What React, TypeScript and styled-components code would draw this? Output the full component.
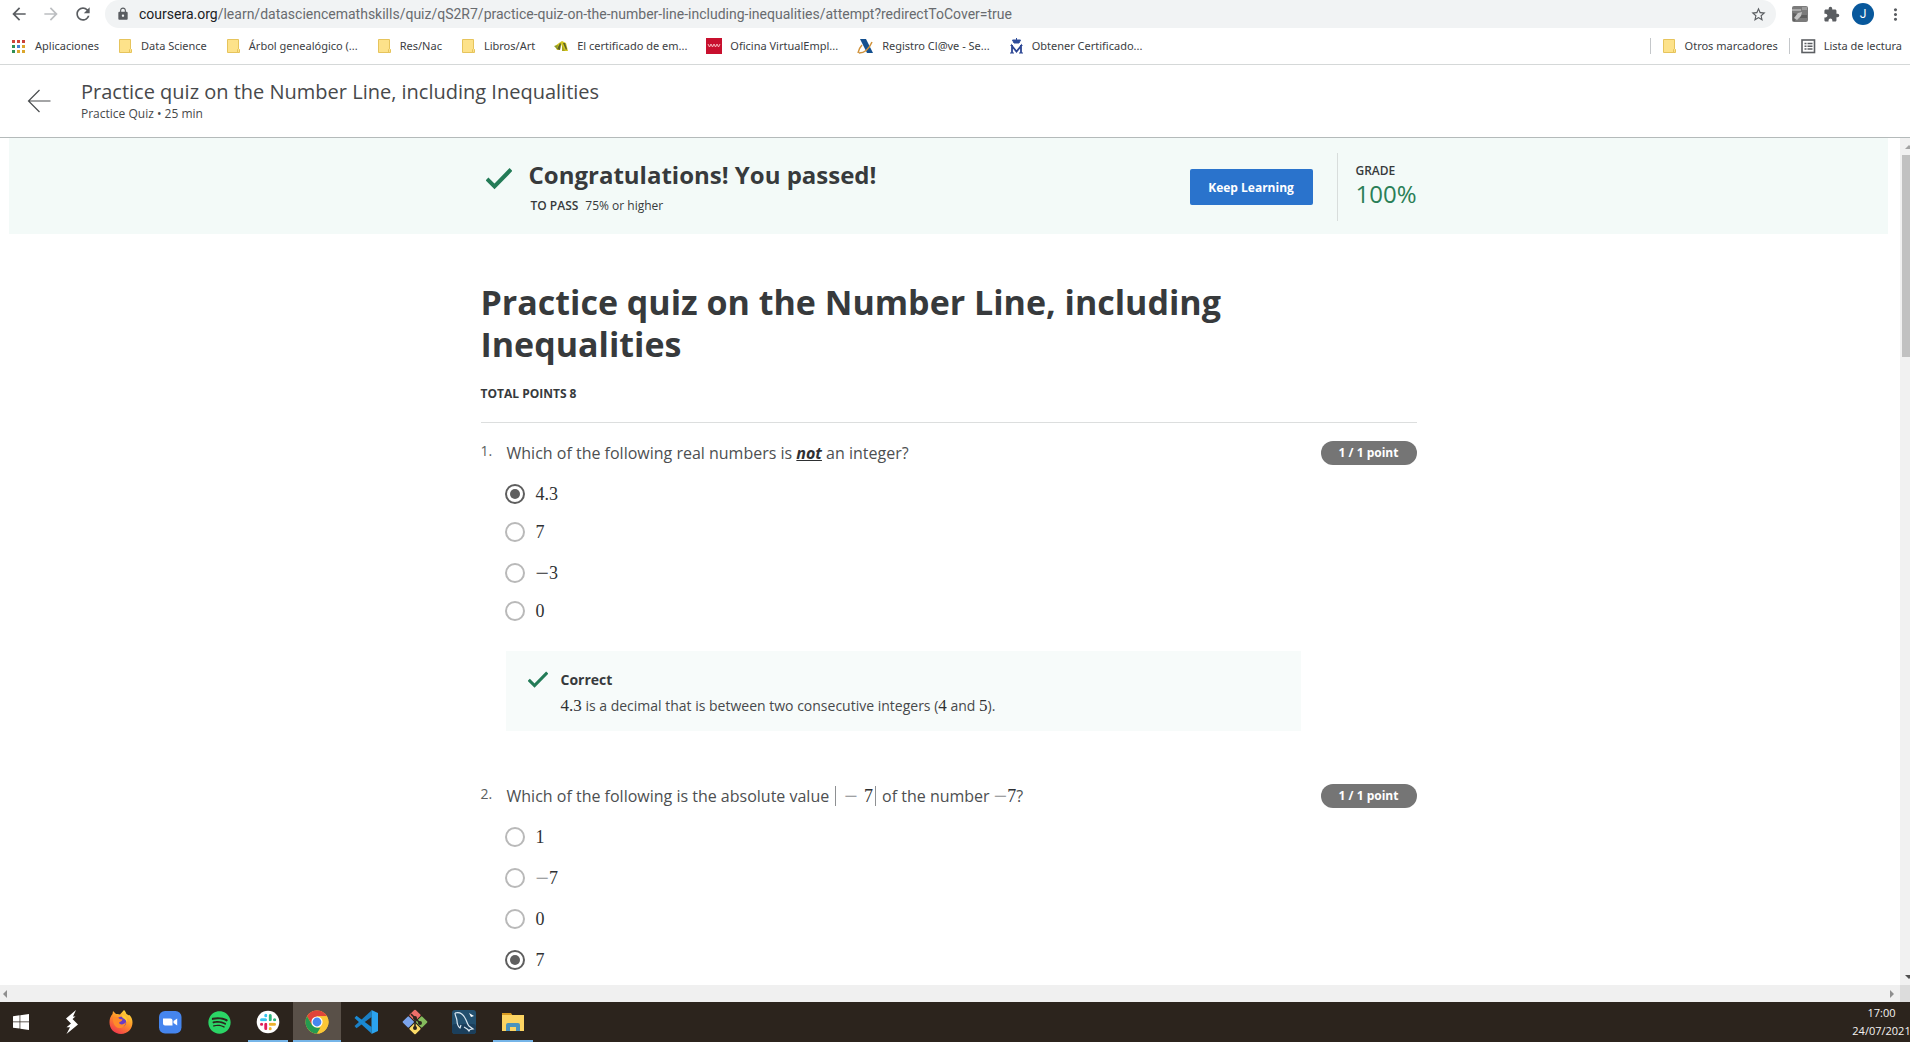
import React from 'react';
import styled, { createGlobalStyle, css } from 'styled-components';
import { MdArrowBack, MdArrowForward, MdRefresh, MdLock, MdStarBorder, MdExtension, MdMoreVert } from 'react-icons/md';
import { FaSpotify } from 'react-icons/fa';

const Global = createGlobalStyle`
  * { box-sizing: border-box; }
  body { margin: 0; background: #fff; font-family: 'Open Sans', 'Noto Sans', sans-serif; color: #373a3c; overflow: hidden; }
  button, input { font-family: inherit; }
  button { cursor: pointer; }
`;

const Screen = styled.div`
  height: 100vh;
  display: flex;
  flex-direction: column;
`;

/* Browser chrome */
const Toolbar = styled.div`
  height: 28px;
  flex: none;
  display: flex;
  align-items: center;
  padding: 0 5px 0 9px;
  overflow: hidden;
  font-family: Roboto, 'Open Sans', sans-serif;
`;
const IconButton = styled.button<{ $faded?: boolean }>`
  border: 0;
  padding: 0;
  background: none;
  width: 20px;
  height: 20px;
  display: flex;
  align-items: center;
  justify-content: center;
  color: ${(p) => (p.$faded ? '#bcbec1' : '#5a5d61')};
`;
const NavGroup = styled.div`
  display: flex;
  gap: 12px;
`;
const Omnibox = styled.form`
  flex: 1;
  height: 28px;
  margin: 0 14px 0 12px;
  padding: 0 8px 0 11px;
  background: #f1f3f4;
  border-radius: 14px;
  display: flex;
  align-items: center;
  font-size: 14px;
  line-height: 20px;
  color: #202124;
`;
const Host = styled.label`
  margin-left: 9px;
`;
const UrlInput = styled.input`
  flex: 1;
  min-width: 0;
  border: 0;
  padding: 0;
  background: none;
  outline: none;
  font-size: 14px;
  line-height: 20px;
  height: 20px;
  color: #686b6f;
`;
const ToolGroup = styled.div`
  display: flex;
  align-items: center;
  gap: 11px;
`;
const Avatar = styled.button`
  border: 0;
  padding: 0;
  width: 22px;
  height: 22px;
  border-radius: 50%;
  background: #08589c;
  color: #fff;
  font-size: 12px;
  line-height: 22px;
`;

const BookmarkBar = styled.nav`
  height: 37px;
  flex: none;
  display: flex;
  justify-content: space-between;
  border-bottom: 1px solid #d5d8d8;
  padding: 0 8px 0 10px;
  font-family: 'Noto Sans', 'Open Sans', sans-serif;
`;
const BookmarkGroup = styled.div<{ $gap: number }>`
  display: flex;
  align-items: center;
  height: 36px;
  gap: ${(p) => p.$gap}px;
`;
const Bookmark = styled.a`
  display: flex;
  align-items: center;
  gap: 8px;
  font-size: 11px;
  line-height: 16px;
  color: #3c4043;
  text-decoration: none;
  white-space: nowrap;
  svg { flex: none; }
`;
const Separator = styled.span`
  width: 1px;
  height: 16px;
  background: #c4c7ca;
`;

/* Quiz header */
const Header = styled.header`
  height: 73px;
  flex: none;
  display: flex;
  padding: 13px 27px 0;
  border-bottom: 1px solid #b4baba;
  color: #47494b;
`;
const BackLink = styled.a`
  width: 54px;
  padding-top: 11px;
`;
const HeaderTitle = styled.div`
  font-size: 20px;
  line-height: 28px;
`;
const HeaderMeta = styled.div`
  font-size: 12px;
  line-height: 16px;
`;

/* Page body with its scroll bars */
const Viewport = styled.div`
  flex: 1;
  min-height: 0;
  display: grid;
  grid-template-columns: minmax(0, 1fr) 10px;
  grid-template-rows: minmax(0, 1fr) 17px;
`;
const Page = styled.main`
  overflow: hidden;
  padding: 0 12px 0 9px;
`;
const VTrack = styled.div`
  background: #f1f1f1;
  display: flex;
  flex-direction: column;
  overflow: hidden;
  padding-left: 2px;
`;
const Thumb = styled.div`
  height: 202px;
  margin-bottom: auto;
  background: #c1c1c1;
`;
const ArrowCell = styled.div`
  height: 17px;
  width: 14px;
  display: flex;
  align-items: center;
  justify-content: center;
`;
const HTrack = styled.div`
  background: #f0f0f0;
  display: flex;
  justify-content: space-between;
  align-items: center;
  padding: 0 4px 0 1px;
`;
const Corner = styled.div`
  background: #dcdcdc;
`;

const Banner = styled.section`
  background: #f3faf8;
  height: 96px;
`;
const Column = styled.div`
  max-width: 936px;
  margin: 0 auto;
`;
const BannerRow = styled(Column)`
  height: 100%;
  padding: 2px 0 0 5px;
  display: flex;
  align-items: center;
`;
const BannerCheck = styled.span`
  align-self: flex-start;
  height: 26px;
  margin-top: 25px;
`;
const BannerText = styled.div`
  flex: 1;
  margin-left: 17px;
`;
const BannerTitle = styled.h2`
  margin: 0 0 6px;
  font-size: 24px;
  line-height: 32px;
  font-weight: 700;
`;
const PassLine = styled.p`
  margin: 0;
  padding-left: 2px;
  font-size: 12px;
  line-height: 18px;
  strong { font-weight: 600; margin-right: 7px; }
`;
const PrimaryButton = styled.button`
  border: 0;
  border-radius: 2px;
  background: #2a73cc;
  color: #fff;
  width: 123px;
  height: 36px;
  font-size: 12px;
  font-weight: 700;
`;
const Grade = styled.div`
  margin-left: 24px;
  height: 68px;
  width: 80px;
  border-left: 1px solid #d8dddc;
  padding: 9px 0 0 18px;
`;
const GradeLabel = styled.div`
  font-size: 12px;
  line-height: 18px;
  font-weight: 600;
`;
const GradeValue = styled.div`
  font-size: 24px;
  line-height: 28px;
  color: #2a7f57;
`;

const Title = styled.h1`
  margin: 47px 0 20px;
  font-size: 34px;
  line-height: 42px;
  font-weight: 700;
`;
const Points = styled.p`
  margin: 0;
  padding-bottom: 19px;
  border-bottom: 1px solid #dcdede;
  font-size: 12px;
  line-height: 18px;
  font-weight: 700;
`;

const QuestionBlock = styled.fieldset`
  border: 0;
  margin: 0 0 53px;
  padding: 0;
  min-width: 0;
`;
const QuestionList = styled.div`
  padding-top: 18px;
`;
const QuestionRow = styled.div`
  display: flex;
  height: 24px;
`;
const Ordinal = styled.span`
  width: 26px;
  flex: none;
  font-size: 14px;
  line-height: 20px;
  color: #5b5e60;
`;
const Prompt = styled.div`
  flex: 1;
  font-size: 16px;
  line-height: 24px;
  color: #4d4f51;
  em { font-weight: 700; text-decoration: underline; color: #2e3032; }
`;
const Pill = styled.span`
  width: 96px;
  height: 24px;
  border-radius: 12px;
  background: #757575;
  color: #fff;
  font-size: 12px;
  line-height: 24px;
  font-weight: 700;
  text-align: center;
`;
const Options = styled.div`
  padding-left: 24px;
`;
const Option = styled.label<{ $tight?: boolean }>`
  display: flex;
  align-items: center;
  width: fit-content;
  height: 24px;
  margin-top: ${(p) => (p.$tight ? 14 : 17)}px;
`;
const Radio = styled.input`
  appearance: none;
  margin: 0 11px 0 0;
  width: 20px;
  height: 20px;
  border: 2px solid #b9b9b9;
  border-radius: 50%;
  display: grid;
  place-items: center;
  &:checked { border-color: #5e5e5e; }
  &:checked::before {
    content: '';
    width: 10px;
    height: 10px;
    border-radius: 50%;
    background: #5e5e5e;
  }
`;
const MathText = styled.span<{ $small?: boolean }>`
  font-family: 'Liberation Serif', serif;
  font-size: ${(p) => (p.$small ? 17 : 18)}px;
  line-height: 20px;
  color: #2f3133;
`;
const Minus = styled.span<{ $spaced?: boolean; $light?: boolean }>`
  font-size: 24px;
  line-height: 1px;
  vertical-align: -2px;
  margin: 0 ${(p) => (p.$spaced ? '6px' : '0')};
  ${(p) => p.$light && css`color: #8a8c8e;`}
`;
const Bar = styled.span`
  display: inline-block;
  width: 1px;
  height: 20px;
  margin: 0 2px;
  background: #8e9092;
  vertical-align: -4px;
`;
const Feedback = styled.div`
  margin: 28px 116px 0 25px;
  padding: 16px 22px 12px;
  background: #f7fbfa;
  display: flex;
  gap: 13px;
  svg { flex: none; margin-top: 2px; }
`;
const FeedbackTitle = styled.div`
  font-size: 14px;
  line-height: 26px;
  font-weight: 700;
`;
const FeedbackText = styled.div`
  font-size: 14px;
  line-height: 26px;
  color: #47494b;
`;

/* Taskbar */
const Taskbar = styled.footer`
  height: 40px;
  flex: none;
  background: #2c241d;
  display: flex;
  justify-content: space-between;
  overflow: hidden;
`;
const Apps = styled.div`
  display: flex;
  gap: 1px;
`;
const AppButton = styled.button<{ $state?: 'open' | 'active'; $start?: boolean }>`
  width: ${(p) => (p.$start ? 47 : 48)}px;
  height: 40px;
  border: 0;
  padding: 0 ${(p) => (p.$start ? 6 : 0)}px 0 0;
  display: flex;
  align-items: center;
  justify-content: center;
  background: ${(p) => (p.$state === 'active' ? '#595048' : 'none')};
  ${(p) => p.$state && css`
    background-image: linear-gradient(#76b5e8, #76b5e8);
    background-repeat: no-repeat;
    background-position: bottom;
    background-size: ${p.$state === 'active' ? '100%' : '40px'} 2px;
  `}
`;
const Clock = styled.time`
  width: 57px;
  padding-top: 2px;
  display: flex;
  flex-direction: column;
  align-items: center;
  color: #f4f2f0;
  font-size: 11px;
  line-height: 18px;
`;

const FolderIcon = () => (
  <svg width="15" height="16" viewBox="0 0 15 16" aria-hidden="true">
    <path d="M1.500 1.500h11v13h-11z" fill="#fde28a" stroke="#e6c45c" />
    <path d="M11.500 14.500v-3l1-1 1 1v3z" fill="#fde28a" stroke="#e6c45c" />
  </svg>
);
const AppsIcon = () => {
  const colors = ['#d0453a', '#d0453a', '#c9403a', '#2f8f55', '#3f83d8', '#dba62c', '#2f8f55', '#dba62c', '#dba62c'];
  return (
    <svg width="17" height="16" viewBox="0 0 17 16" aria-hidden="true">
      {colors.map((c, i) => (
        <rect key={i} x={2 + (i % 3) * 5} y={2 + Math.floor(i / 3) * 5} width="3" height="3" fill={c} />
      ))}
    </svg>
  );
};
const LeafIcon = () => (
  <svg width="15" height="16" viewBox="0 0 15 16" aria-hidden="true">
    <path d="M1 8l4-3 3-2 4 2 2 8h-4L7 6l-1 6H3z" fill="#d3c61f" />
    <path d="M3 11l3-6 1 1-1 6zM9 5l3 7 1-1-2-6z" fill="#5b6128" />
    <path d="M0 8l4-1-1 4z" fill="#8d9a2a" />
    <path d="M8 7l3 6H8z" fill="#a9a41f" />
  </svg>
);
const MadridIcon = () => (
  <svg width="16" height="16" viewBox="0 0 16 16" aria-hidden="true">
    <rect width="16" height="16" fill="#c8102e" />
    <path d="M2 6l1.500 3L5 6l1.500 3L8 6l1.500 3L11 6l1.500 3L14 6" fill="none" stroke="#f5b8bd" />
  </svg>
);
const AgencyIcon = () => (
  <svg width="17" height="16" viewBox="0 0 17 16" aria-hidden="true">
    <path d="M3 1h6l7 14h-6z" fill="#14508f" />
    <path d="M1 15c1-4 2-6 4-8M2 15c5 0 10-4 13-11" fill="none" stroke="#d0923a" strokeWidth="1.500" />
  </svg>
);
const MintIcon = () => (
  <svg width="15" height="16" viewBox="0 0 15 16" aria-hidden="true">
    <path d="M3.500 2h8l-1.500 3H5zM7.500 0v3" fill="#2f4d9a" stroke="#2f4d9a" />
    <path d="M3 15V8l4.500 5.500L12 8v7" fill="none" stroke="#2b4593" strokeWidth="1.800" />
    <path d="M1 15h4M10 15h4M1.500 7.500H4M11 7.500h2.500" stroke="#2b4593" />
  </svg>
);
const ReadingIcon = () => (
  <svg width="15" height="16" viewBox="0 0 15 16" aria-hidden="true">
    <rect x="1" y="2" width="12.500" height="12.500" fill="none" stroke="#5c5f63" strokeWidth="1.600" />
    <path d="M3.500 5.500h2M3.500 8.300h2M3.500 11h2M6.500 5.500h5M6.500 8.300h5M6.500 11h5" stroke="#5c5f63" strokeWidth="1.400" />
  </svg>
);
const PhotoIcon = () => (
  <svg width="16" height="16" viewBox="0 0 16 16" aria-hidden="true">
    <rect width="16" height="16" rx="2" fill="#7b7b7b" />
    <path d="M0 3h9v2H0z" fill="#a9a9a9" />
    <path d="M10 1h5v3h-5z" fill="#9a9a9a" />
    <path d="M1 7l4 1-2 7H1zM8 9h7v3H8z" fill="#5f5f5f" />
    <path d="M2 12l4-5 4-1-1 4-4 4z" fill="#c4c4c4" />
  </svg>
);
const LongArrow = () => (
  <svg width="24" height="24" viewBox="0 0 24 24" fill="none" stroke="#4a4d4f" strokeWidth="1.200" aria-hidden="true">
    <path d="M12.500 1L1.500 12l11 11M1.500 12h22" />
  </svg>
);
const Check = ({ size, width }: { size: number; width: number }) => (
  <svg width={size} height={size} viewBox="0 0 26 26" fill="none" stroke="#237b57" strokeWidth={width} aria-hidden="true">
    <path d="M1 14l7.500 7.500L25 4.500" />
  </svg>
);
const Triangle = ({ dir, color }: { dir: 'up' | 'down' | 'left' | 'right'; color: string }) => {
  const d = { up: 'M0 6h8L4 2z', down: 'M0 2h8L4 6z', left: 'M6 0v8L2 4z', right: 'M2 0v8l4-4z' }[dir];
  return (
    <svg width="8" height="8" viewBox="0 0 8 8" aria-hidden="true"><path d={d} fill={color} /></svg>
  );
};

const WindowsLogo = () => (
  <svg width="16" height="16" viewBox="0 0 16 16" fill="#fff" aria-hidden="true">
    <path d="M0 2.200l6.600-.9v6.300H0zM7.300 1.200L16 0v7.600H7.300zM0 8.300h6.600v6.300L0 13.700zM7.300 8.300H16V16l-8.700-1.200z" />
  </svg>
);
const BoltLogo = () => (
  <svg width="14" height="24" viewBox="0 0 14 24" fill="#fff" aria-hidden="true">
    <path d="M11 0L1 8.500l5 5-4.500 3.800h3.500L1.500 24 13 14.500 7.500 9l3-2.500H8z" />
  </svg>
);
const FirefoxLogo = () => (
  <svg width="24" height="24" viewBox="0 0 24 24" aria-hidden="true">
    <defs>
      <linearGradient id="fx" x1="0.800" y1="0" x2="0.200" y2="1">
        <stop offset="0" stopColor="#ffe23e" /><stop offset="0.450" stopColor="#ff9328" /><stop offset="1" stopColor="#f02f50" />
      </linearGradient>
    </defs>
    <path d="M15 0c1 1 2 2.500 2.300 3.700C19 5 20 5.500 20.500 5c2 2 3 4.500 3 7.500C23.500 19 18.500 24 12 24S.500 19 .500 12.500C.500 8.500 1.800 6 3.500 4l.500-3 3 3c1.500-.300 3 0 4 .500C12 3 13.500 2 15 0z" fill="url(#fx)" />
    <circle cx="12" cy="12" r="5.300" fill="#6a3cc4" />
    <path d="M4 8c3-1.500 5-1 6 .500 1 1.200 3 .500 3.500 1-.500 2-3 2-3.500 3.500 1 2 5 2 7-1-1 5-4 6.500-7 6C6 17.500 3.500 13 4 8z" fill="#ff8a2a" />
    <path d="M13 5c3 0 6 3 5 8-1-3-2-4-4.500-5z" fill="#ffca36" />
  </svg>
);
const ZoomLogo = () => (
  <svg width="24" height="24" viewBox="0 0 24 24" aria-hidden="true">
    <rect x="1" y="1" width="22.500" height="22.500" rx="6" fill="#4585ee" />
    <path d="M5 8.500h7.500a2 2 0 0 1 2 2v5H7a2 2 0 0 1-2-2zM15.500 11l3.700-2.500v7L15.500 13z" fill="#fff" />
  </svg>
);
const SlackLogo = () => (
  <svg width="24" height="24" viewBox="0 0 24 24" aria-hidden="true">
    <circle cx="12" cy="12" r="11.300" fill="#fff" />
    <g strokeWidth="3" strokeLinecap="round">
      <path d="M5.500 9.800h4M9.800 5.300v.500" stroke="#36c5f0" />
      <path d="M14.200 5.500v4.300M18.500 9.800h.200" stroke="#2eb67d" />
      <path d="M14.200 14.200h4.300M14.200 18.500v.200" stroke="#ecb22e" />
      <path d="M9.800 14.200v4.300M5.500 14.200h.200" stroke="#e01e5a" />
    </g>
    <path d="M12 4v16M4 12h16" stroke="#fff" />
  </svg>
);
const ChromeLogo = () => (
  <svg width="24" height="24" viewBox="0 0 24 24" aria-hidden="true">
    <circle cx="12" cy="12" r="11.500" fill="#fbc735" />
    <path d="M2.040 6.250A11.500 11.500 0 0 1 21.960 6.250L12 6.300 7 14.900z" fill="#e0453a" />
    <path d="M2.040 6.250L7 14.900 12 17.700h5L12 23.500A11.500 11.500 0 0 1 2.040 6.250z" fill="#259b50" />
    <path d="M21.960 6.250A11.500 11.500 0 0 1 12 23.500L17 14.800 12 6.300z" fill="#fbc735" />
    <circle cx="12" cy="12" r="5.600" fill="#fff" />
    <circle cx="12" cy="12" r="4.400" fill="#4787f0" />
  </svg>
);
const CodeLogo = () => (
  <svg width="26" height="26" viewBox="0 0 26 26" aria-hidden="true">
    <path d="M18.500 1.500L1.500 17l2 2.200L18.500 8z" fill="#1b7fc4" />
    <path d="M1.500 9l2-2.200L18.500 18v6.500z" fill="#1a8ad4" />
    <path d="M18.500 1L25 4v18l-6.500 3z" fill="#2ba3ee" />
  </svg>
);
const GitLogo = () => (
  <svg width="26" height="26" viewBox="0 0 26 26" aria-hidden="true">
    <g transform="rotate(45 13 13)">
      <rect x="4" y="4" width="8.500" height="8.500" rx="1" fill="#ee6f6a" />
      <rect x="13.500" y="4" width="8.500" height="8.500" rx="1" fill="#84bb5c" />
      <rect x="4" y="13.500" width="8.500" height="8.500" rx="1" fill="#7ba4ec" />
      <rect x="13.500" y="13.500" width="8.500" height="8.500" rx="1" fill="#fbdb68" />
    </g>
    <path d="M9 5l4 4v10M13 9l5 5" fill="none" stroke="#2c241d" strokeWidth="1.600" />
    <circle cx="13" cy="9" r="2" fill="#2c241d" />
    <circle cx="18" cy="14" r="2" fill="#2c241d" />
    <circle cx="13" cy="19" r="2" fill="#2c241d" />
  </svg>
);
const DolphinLogo = () => (
  <svg width="24" height="24" viewBox="0 0 24 24" aria-hidden="true">
    <rect width="24" height="24" rx="3" fill="#23506f" />
    <rect y="14" width="24" height="10" rx="3" fill="#1b3f5c" />
    <path d="M3 3c4-1 8 1 10 5 2 3 2 6 4 8l4 3-3 .500-1 1.500c-1-2-3-3-5-4M3 3c0 3 2 5 2 8 0 2 1 6 3 7l1-3" fill="none" stroke="#dbe8f2" strokeWidth="1.200" />
    <path d="M17 3l5 3-3 1z" fill="#fff" />
  </svg>
);
const ExplorerLogo = () => (
  <svg width="24" height="24" viewBox="0 0 24 24" aria-hidden="true">
    <path d="M1 3h9l2 3H1z" fill="#d79a21" />
    <path d="M1 5h22v16H1z" fill="#fcd462" />
    <path d="M5 21v-6a2 2 0 0 1 2-2h10a2 2 0 0 1 2 2v6h-4v-4H9v4z" fill="#4a93bd" />
  </svg>
);

const bookmarks: [string, () => React.JSX.Element][] = [
  ['Aplicaciones', AppsIcon],
  ['Data Science', FolderIcon],
  ['Árbol genealógico (...', FolderIcon],
  ['Res/Nac', FolderIcon],
  ['Libros/Art', FolderIcon],
  ['El certificado de em...', LeafIcon],
  ['Oficina VirtualEmpl...', MadridIcon],
  ['Registro Cl@ve - Se...', AgencyIcon],
  ['Obtener Certificado...', MintIcon],
];

const apps: { name: string; icon: React.ReactNode; state?: 'open' | 'active' }[] = [
  { name: 'Inicio', icon: <WindowsLogo /> },
  { name: 'Accesos', icon: <BoltLogo /> },
  { name: 'Firefox', icon: <FirefoxLogo /> },
  { name: 'Zoom', icon: <ZoomLogo /> },
  { name: 'Spotify', icon: <FaSpotify size={23} color="#2bd566" /> },
  { name: 'Slack', icon: <SlackLogo />, state: 'open' },
  { name: 'Chrome', icon: <ChromeLogo />, state: 'active' },
  { name: 'Visual Studio Code', icon: <CodeLogo /> },
  { name: 'Git', icon: <GitLogo /> },
  { name: 'MySQL Workbench', icon: <DolphinLogo /> },
  { name: 'Explorador', icon: <ExplorerLogo />, state: 'open' },
];

type Choice = { label: React.ReactNode; value: string; tight?: boolean };
type QuestionProps = { n: number; prompt: React.ReactNode; choices: Choice[]; selected: string; children?: React.ReactNode };

const Question = ({ n, prompt, choices, selected, children }: QuestionProps) => (
  <QuestionBlock aria-labelledby={`q${n}`}>
    <QuestionRow>
      <Ordinal>{n}.</Ordinal>
      <Prompt id={`q${n}`}>{prompt}</Prompt>
      <Pill>1 / 1 point</Pill>
    </QuestionRow>
    <Options>
      {choices.map((c) => (
        <Option key={c.value} $tight={c.tight}>
          <Radio type="radio" name={`question-${n}`} value={c.value} defaultChecked={c.value === selected} />
          <MathText>{c.label}</MathText>
        </Option>
      ))}
    </Options>
    {children}
  </QuestionBlock>
);

export default function App() {
  return (
    <Screen>
      <Global />
      <Toolbar>
        <NavGroup>
          <IconButton aria-label="Atrás"><MdArrowBack size={20} /></IconButton>
          <IconButton aria-label="Adelante" $faded><MdArrowForward size={20} /></IconButton>
          <IconButton aria-label="Recargar"><MdRefresh size={20} /></IconButton>
        </NavGroup>
        <Omnibox onSubmit={(e) => e.preventDefault()}>
          <MdLock size={14} color="#5a5d61" />
          <Host htmlFor="url">coursera.org</Host>
          <UrlInput
            id="url"
            defaultValue="/learn/datasciencemathskills/quiz/qS2R7/practice-quiz-on-the-number-line-including-inequalities/attempt?redirectToCover=true"
          />
          <IconButton type="button" aria-label="Añadir a marcadores"><MdStarBorder size={17} /></IconButton>
        </Omnibox>
        <ToolGroup>
          <IconButton aria-label="Extensión"><PhotoIcon /></IconButton>
          <IconButton aria-label="Extensiones"><MdExtension size={17} /></IconButton>
          <Avatar aria-label="Perfil">J</Avatar>
          <IconButton aria-label="Menú"><MdMoreVert size={19} /></IconButton>
        </ToolGroup>
      </Toolbar>
      <BookmarkBar>
        <BookmarkGroup $gap={19}>
          {bookmarks.map(([label, Icon]) => (
            <Bookmark key={label} href="#"><Icon />{label}</Bookmark>
          ))}
        </BookmarkGroup>
        <BookmarkGroup $gap={11}>
          <Separator />
          <Bookmark href="#"><FolderIcon />Otros marcadores</Bookmark>
          <Separator />
          <Bookmark href="#"><ReadingIcon />Lista de lectura</Bookmark>
        </BookmarkGroup>
      </BookmarkBar>

      <Header>
        <BackLink href="#" aria-label="Back"><LongArrow /></BackLink>
        <div>
          <HeaderTitle>Practice quiz on the Number Line, including Inequalities</HeaderTitle>
          <HeaderMeta>Practice Quiz • 25 min</HeaderMeta>
        </div>
      </Header>

      <Viewport>
        <Page>
          <Banner>
            <BannerRow>
              <BannerCheck><Check size={26} width={4} /></BannerCheck>
              <BannerText>
                <BannerTitle>Congratulations! You passed!</BannerTitle>
                <PassLine><strong>TO PASS</strong>75% or higher</PassLine>
              </BannerText>
              <PrimaryButton>Keep Learning</PrimaryButton>
              <Grade>
                <GradeLabel>GRADE</GradeLabel>
                <GradeValue>100%</GradeValue>
              </Grade>
            </BannerRow>
          </Banner>
          <Column>
            <Title>Practice quiz on the Number Line, including Inequalities</Title>
            <Points>TOTAL POINTS 8</Points>
            <QuestionList>
              <Question
                n={1}
                prompt={<>Which of the following real numbers is <em>not</em> an integer?</>}
                selected="4.3"
                choices={[
                  { value: '4.3', label: '4.3' },
                  { value: '7', label: '7', tight: true },
                  { value: '-3', label: <><Minus>−</Minus>3</> },
                  { value: '0', label: '0', tight: true },
                ]}
              >
                <Feedback>
                  <Check size={20} width={4} />
                  <div>
                    <FeedbackTitle>Correct</FeedbackTitle>
                    <FeedbackText>
                      <MathText $small>4.3</MathText> is a decimal that is between two consecutive integers (
                      <MathText $small>4</MathText> and <MathText $small>5</MathText>).
                    </FeedbackText>
                  </div>
                </Feedback>
              </Question>
              <Question
                n={2}
                prompt={
                  <>
                    Which of the following is the absolute value{' '}
                    <MathText><Bar /><Minus $spaced $light>−</Minus>7<Bar /></MathText> of the number{' '}
                    <MathText><Minus $light>−</Minus>7</MathText>?
                  </>
                }
                selected="7"
                choices={[
                  { value: '1', label: '1' },
                  { value: '-7', label: <><Minus $light>−</Minus>7</> },
                  { value: '0', label: '0' },
                  { value: '7', label: '7' },
                ]}
              />
            </QuestionList>
          </Column>
        </Page>
        <VTrack>
          <ArrowCell><Triangle dir="up" color="#a3a3a3" /></ArrowCell>
          <Thumb />
          <ArrowCell><Triangle dir="down" color="#505050" /></ArrowCell>
        </VTrack>
        <HTrack>
          <Triangle dir="left" color="#8f8f8f" />
          <Triangle dir="right" color="#8f8f8f" />
        </HTrack>
        <Corner />
      </Viewport>

      <Taskbar>
        <Apps>
          {apps.map((a, i) => (
            <AppButton key={a.name} aria-label={a.name} $state={a.state} $start={i === 0}>{a.icon}</AppButton>
          ))}
        </Apps>
        <Clock dateTime="2021-07-24T17:00">
          <span>17:00</span>
          <span>24/07/2021</span>
        </Clock>
      </Taskbar>
    </Screen>
  );
}
